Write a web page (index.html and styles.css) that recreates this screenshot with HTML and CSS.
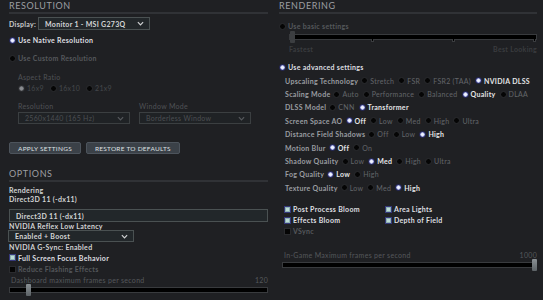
FILE: index.html
```html
<!DOCTYPE html>
<html lang="en">
  <head>
    <meta charset="UTF-8" />
    <title>Settings</title>
    <link rel="stylesheet" href="styles.css">
  </head>
  <body>
    <div class="page">
      <section class="col col-left">
        <h2 class="head">Resolution</h2>
        <div class="display-row">
          <span class="lbl-strong">Display:</span>
          <div class="select sel-display">
            <span>Monitor 1 - MSI G273Q</span>
            <svg class="chev" viewBox="0 0 8 5"><path d="M1 1 L4 4 L7 1" /></svg>
          </div>
        </div>
        <div class="radio-row bright native"><i class="radio sel"></i>Use Native Resolution</div>
        <div class="radio-row dim custom"><i class="radio"></i>Use Custom Resolution</div>

        <div class="sub">
          <div class="sub-lbl aspect">Aspect Ratio</div>
          <div class="inline-radios">
            <span class="opt"><i class="radio dis-sel"></i>16x9</span>
            <span class="opt"><i class="radio"></i>16x10</span>
            <span class="opt"><i class="radio"></i>21x9</span>
          </div>
          <div class="pair">
            <div class="field">
              <div class="sub-lbl">Resolution</div>
              <div class="select dis">
                <span>2560x1440 (165 Hz)</span>
                <svg class="chev" viewBox="0 0 8 5"><path d="M1 1 L4 4 L7 1" /></svg>
              </div>
            </div>
            <div class="field">
              <div class="sub-lbl">Window Mode</div>
              <div class="select dis">
                <span>Borderless Window</span>
                <svg class="chev" viewBox="0 0 8 5"><path d="M1 1 L4 4 L7 1" /></svg>
              </div>
            </div>
          </div>
        </div>

        <div class="buttons">
          <button class="btn">Apply Settings</button>
          <button class="btn">Restore to Defaults</button>
        </div>

        <h2 class="head head-options">Options</h2>
        <div class="line first">Rendering</div>
        <div class="line">Direct3D 11 (-dx11)</div>
        <div class="select sel-wide">
          <span>Direct3D 11 (-dx11)</span>
        </div>
        <div class="line reflex">NVIDIA Reflex Low Latency</div>
        <div class="select sel-reflex">
          <span>Enabled + Boost</span>
          <svg class="chev" viewBox="0 0 8 5"><path d="M1 1 L4 4 L7 1" /></svg>
        </div>
        <div class="line gsync">NVIDIA G-Sync: Enabled</div>
        <div class="check-row bright fs"><i class="check on"></i>Full Screen Focus Behavior</div>
        <div class="check-row dim rf"><i class="check"></i>Reduce Flashing Effects</div>
        <div class="range-head dim"><span>Dashboard maximum frames per second</span><span>120</span></div>
        <div class="slider">
          <div class="track"></div>
          <div class="thumb" style="left: 17px"></div>
        </div>
      </section>

      <section class="col col-right">
        <h2 class="head">Rendering</h2>
        <div class="radio-row dim basic"><i class="radio"></i>Use basic settings</div>
        <div class="slider basic-slider">
          <div class="track"></div>
          <div class="thumb dark" style="left: 1px"></div>
          <div class="tick" style="left: 82px"></div>
          <div class="tick" style="left: 163px"></div>
          <div class="tick" style="left: 244px"></div>
        </div>
        <div class="range-foot"><span>Fastest</span><span>Best Looking</span></div>
        <div class="radio-row bright advanced"><i class="radio sel"></i>Use advanced settings</div>

        <div class="options">
          <div class="opt-row">
            <span class="opt-lbl">Upscaling Technology</span>
            <span class="opt"><i class="radio"></i>Stretch</span>
            <span class="opt"><i class="radio"></i>FSR</span>
            <span class="opt"><i class="radio"></i>FSR2 (TAA)</span>
            <span class="opt on"><i class="radio sel"></i>NVIDIA DLSS</span>
          </div>
          <div class="opt-row">
            <span class="opt-lbl">Scaling Mode</span>
            <span class="opt"><i class="radio"></i>Auto</span>
            <span class="opt"><i class="radio"></i>Performance</span>
            <span class="opt"><i class="radio"></i>Balanced</span>
            <span class="opt on"><i class="radio sel"></i>Quality</span>
            <span class="opt"><i class="radio"></i>DLAA</span>
          </div>
          <div class="opt-row">
            <span class="opt-lbl">DLSS Model</span>
            <span class="opt"><i class="radio"></i>CNN</span>
            <span class="opt on"><i class="radio sel"></i>Transformer</span>
          </div>
          <div class="opt-row">
            <span class="opt-lbl">Screen Space AO</span>
            <span class="opt on"><i class="radio sel"></i>Off</span>
            <span class="opt"><i class="radio"></i>Low</span>
            <span class="opt"><i class="radio"></i>Med</span>
            <span class="opt"><i class="radio"></i>High</span>
            <span class="opt"><i class="radio"></i>Ultra</span>
          </div>
          <div class="opt-row">
            <span class="opt-lbl">Distance Field Shadows</span>
            <span class="opt"><i class="radio"></i>Off</span>
            <span class="opt"><i class="radio"></i>Low</span>
            <span class="opt on"><i class="radio sel"></i>High</span>
          </div>
          <div class="opt-row">
            <span class="opt-lbl">Motion Blur</span>
            <span class="opt on"><i class="radio sel"></i>Off</span>
            <span class="opt"><i class="radio"></i>On</span>
          </div>
          <div class="opt-row">
            <span class="opt-lbl">Shadow Quality</span>
            <span class="opt"><i class="radio"></i>Low</span>
            <span class="opt on"><i class="radio sel"></i>Med</span>
            <span class="opt"><i class="radio"></i>High</span>
            <span class="opt"><i class="radio"></i>Ultra</span>
          </div>
          <div class="opt-row">
            <span class="opt-lbl">Fog Quality</span>
            <span class="opt on"><i class="radio sel"></i>Low</span>
            <span class="opt"><i class="radio"></i>High</span>
          </div>
          <div class="opt-row">
            <span class="opt-lbl">Texture Quality</span>
            <span class="opt"><i class="radio"></i>Low</span>
            <span class="opt"><i class="radio"></i>Med</span>
            <span class="opt on"><i class="radio sel"></i>High</span>
          </div>
        </div>

        <div class="checks">
          <div class="check-row bright"><i class="check on"></i>Post Process Bloom</div>
          <div class="check-row bright"><i class="check on"></i>Area Lights</div>
          <div class="check-row bright"><i class="check on"></i>Effects Bloom</div>
          <div class="check-row bright"><i class="check on"></i>Depth of Field</div>
          <div class="check-row dim"><i class="check"></i>VSync</div>
        </div>

        <div class="range-head dim ingame"><span>In-Game Maximum frames per second</span><span>1000</span></div>
        <div class="slider ingame-slider">
          <div class="track"></div>
          <div class="thumb" style="right: 0"></div>
        </div>
      </section>
    </div>
  </body>
</html>
```

FILE: styles.css
```css
html {
  font-family: "Lato", "DejaVu Sans", sans-serif;
}

body {
  margin: 0;
  background-color: #1f2023;
  color: #d6d6d6;
  font-size: 7px;
  letter-spacing: 0.3px;
  width: 543px;
  height: 300px;
  overflow: hidden;
}

.page {
  display: flex;
}

.col {
  display: flex;
  flex-direction: column;
}

.col-left {
  width: 259px;
  padding-left: 9px;
}

.col-right {
  width: 258px;
  margin-left: 11px;
}

.head {
  margin: 0;
  height: 12px;
  line-height: 12px;
  font-size: 9px;
  font-weight: 400;
  letter-spacing: 0.6px;
  text-transform: uppercase;
  color: #9c9ea1;
  border-bottom: 2px solid #303236;
}

.head-options {
  margin-top: 14px;
}

/* radios and checks */
.radio {
  display: inline-block;
  box-sizing: border-box;
  width: 7px;
  height: 7px;
  border-radius: 50%;
  background: #050505;
  border: 1px solid #2c2d30;
  margin-right: 2px;
  flex: none;
}

.radio.sel {
  background: radial-gradient(circle, #eef2ff 0 30%, #aab0e0 55%, #5258a8 80%);
  border: 1px solid #25285e;
}

.radio.dis-sel {
  background: radial-gradient(circle, #8a8c90 0 35%, #4a4c50 80%);
  border-color: #2c2d30;
}

.check {
  display: inline-block;
  box-sizing: border-box;
  width: 7px;
  height: 7px;
  background: #050505;
  border: 1px solid #2a2b2e;
  margin-right: 2px;
  flex: none;
}

.check.on {
  background: #bcdcd8;
  border: 1px solid #35387a;
  box-shadow: inset 0 0 0 1px #8fb2b4;
}

.radio-row,
.check-row {
  display: flex;
  align-items: center;
  height: 10px;
  line-height: 10px;
  font-weight: 700;
}

.bright {
  color: #dedfe0;
}

.dim {
  color: #55585c;
}

.native {
  margin-top: 5px;
}

.custom {
  margin-top: 8px;
}

/* display select */
.display-row {
  display: flex;
  align-items: center;
  margin-top: 3px;
  gap: 2px;
}

.lbl-strong {
  font-weight: 700;
  color: #c9cacb;
  width: 27px;
}

.select {
  box-sizing: border-box;
  display: flex;
  align-items: center;
  justify-content: space-between;
  height: 13px;
  padding: 0 5px 0 6px;
  background: #22272a;
  border: 1px solid #4a5152;
  color: #d4d5d6;
  font-weight: 700;
}

.chev {
  width: 7px;
  height: 5px;
  fill: none;
  stroke: #cfd0d2;
  stroke-width: 1.4;
}

.sel-display {
  width: 112px;
}

.sub {
  padding-left: 9px;
}

.sub-lbl {
  height: 10px;
  line-height: 10px;
  color: #4f5256;
}

.aspect {
  margin-top: 9px;
}

.inline-radios {
  display: flex;
  height: 10px;
  line-height: 10px;
  margin-top: 1px;
  gap: 6px;
  color: #45484c;
}

.opt {
  display: inline-flex;
  align-items: center;
}

.pair {
  display: flex;
  gap: 9px;
  margin-top: 8px;
}

.field {
  width: 112px;
}

.select.dis {
  margin-top: 1px;
  height: 12px;
  background: #1f2225;
  border-color: #3b3f41;
  color: #4c4f53;
  font-weight: 400;
}

.select.dis .chev {
  stroke: #55585c;
}

.buttons {
  display: flex;
  gap: 5px;
  margin-top: 18px;
}

.btn {
  height: 12px;
  padding: 0 8px;
  font-family: inherit;
  font-size: 6.5px;
  letter-spacing: 0.25px;
  text-transform: uppercase;
  color: #dfe0e2;
  background: #3b4148;
  border: 1px solid #4d545c;
  border-radius: 2px;
}

.line {
  height: 9px;
  line-height: 9px;
  font-weight: 700;
  color: #d2d3d4;
}

.line.first {
  margin-top: 4px;
}

.sel-wide {
  margin-top: 5px;
  width: 259px;
  padding-left: 6px;
}

.line.reflex {
  height: 8px;
  line-height: 8px;
}

.sel-reflex {
  width: 126px;
  height: 12px;
  margin-left: -1px;
}

.line.gsync {
  height: 10px;
  line-height: 10px;
}

.fs {
  height: 11px;
}

.rf {
  margin-top: 1px;
}

.range-head {
  display: flex;
  justify-content: space-between;
  height: 10px;
  line-height: 10px;
  margin-top: 1px;
  padding-left: 2px;
}

.slider {
  position: relative;
  height: 10px;
}

.track {
  margin-top: 2px;
  height: 6px;
  box-sizing: border-box;
  background: #000;
  border: 1px solid #393b3e;
}

.thumb {
  position: absolute;
  top: -1px;
  width: 5px;
  height: 12px;
  background: linear-gradient(#8a9094, #5c6266);
  border-radius: 1px;
}

.thumb.dark {
  background: #3c3e41;
}

.tick {
  position: absolute;
  top: 7px;
  width: 3px;
  height: 3px;
  box-sizing: border-box;
  border: 1px solid #3a3c3f;
  border-top: 0;
  background: #000;
}

/* right column */
.basic {
  margin-top: 7px;
}

.basic-slider {
  margin: 1px 0 0 10px;
  height: 12px;
}

.range-foot {
  display: flex;
  justify-content: space-between;
  height: 10px;
  line-height: 10px;
  margin-left: 10px;
  color: #3a3c3f;
  font-weight: 700;
}

.advanced {
  margin-top: 8px;
}

.options {
  margin-top: 2px;
  padding-left: 6px;
}

.opt-row {
  display: flex;
  align-items: center;
  height: 13.4px;
  gap: 4px;
  color: #63666a;
}

.opt-lbl {
  color: #9a9da1;
  font-weight: 700;
  margin-right: -1px;
}

.opt.on {
  color: #e4e5e6;
  font-weight: 700;
}

.checks {
  display: grid;
  grid-template-columns: 101px 1fr;
  margin-top: 9px;
  padding-left: 5px;
}

.checks .check-row {
  height: 11px;
}

.ingame {
  margin-top: 13px;
  padding-left: 5px;
}

.ingame-slider {
  margin-left: 3px;
}
```
